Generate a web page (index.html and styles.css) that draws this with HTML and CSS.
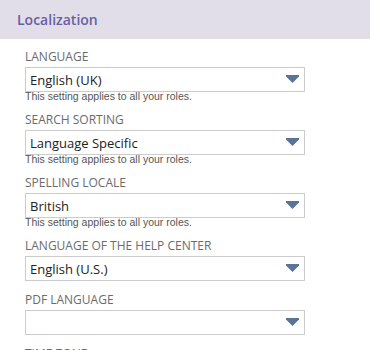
FILE: index.html
```html
<!DOCTYPE html>
<html lang="en">
<head>
    <meta charset="UTF-8">
    <meta name="viewport" content="width=device-width, initial-scale=1.0">
    <title>Localization</title>
    <link rel="stylesheet" href="styles.css">
</head>
<body>
    <header class="section-head">
        <h2>Localization</h2>
    </header>

    <main class="settings">
        <div class="field">
            <label>Language</label>
            <div class="dropdown">
                <span>English (UK)</span>
                <svg width="13" height="8" viewBox="0 0 13 8"><path d="M0 0H13V1.5L6.5 8L0 1.5Z" fill="#5b7396"/></svg>
            </div>
            <div class="hint">This setting applies to all your roles.</div>
        </div>

        <div class="field">
            <label>Search Sorting</label>
            <div class="dropdown">
                <span>Language Specific</span>
                <svg width="13" height="8" viewBox="0 0 13 8"><path d="M0 0H13V1.5L6.5 8L0 1.5Z" fill="#5b7396"/></svg>
            </div>
            <div class="hint">This setting applies to all your roles.</div>
        </div>

        <div class="field">
            <label>Spelling Locale</label>
            <div class="dropdown">
                <span>British</span>
                <svg width="13" height="8" viewBox="0 0 13 8"><path d="M0 0H13V1.5L6.5 8L0 1.5Z" fill="#5b7396"/></svg>
            </div>
            <div class="hint">This setting applies to all your roles.</div>
        </div>

        <div class="field">
            <label>Language of the Help Center</label>
            <div class="dropdown">
                <span>English (U.S.)</span>
                <svg width="13" height="8" viewBox="0 0 13 8"><path d="M0 0H13V1.5L6.5 8L0 1.5Z" fill="#5b7396"/></svg>
            </div>
        </div>

        <div class="field">
            <label>PDF Language</label>
            <div class="dropdown">
                <span></span>
                <svg width="13" height="8" viewBox="0 0 13 8"><path d="M0 0H13V1.5L6.5 8L0 1.5Z" fill="#5b7396"/></svg>
            </div>
        </div>

        <div class="field">
            <label>Time Zone</label>
        </div>
    </main>
</body>
</html>
```

FILE: styles.css
```css
body {
    margin: 0;
    font-family: "Open Sans", "Liberation Sans", sans-serif;
    background: #fff;
    color: #333;
}

.section-head {
    background-color: #e1dee9;
    height: 39px;
    padding: 0 17px;
    display: flex;
    align-items: center;
}

.section-head h2 {
    margin: 0;
    font-size: 14px;
    font-weight: 600;
    color: #6a5fa3;
}

.settings {
    padding: 10px 25px 0;
}

.field {
    margin-bottom: 11px;
}

.field label {
    display: block;
    font-size: 12px;
    line-height: 16px;
    text-transform: uppercase;
    color: #6b6b6b;
    margin-bottom: 2px;
}

.dropdown {
    box-sizing: border-box;
    width: 280px;
    height: 25px;
    border: 1px solid #cccccc;
    display: flex;
    align-items: center;
    justify-content: space-between;
    padding: 0 5px 0 4px;
    font-size: 13px;
    color: #222;
}

.dropdown svg {
    margin-top: -2px;
}

.hint {
    font-family: "Liberation Sans", Arial, sans-serif;
    font-size: 10.5px;
    line-height: 9px;
    color: #555;
}
```
